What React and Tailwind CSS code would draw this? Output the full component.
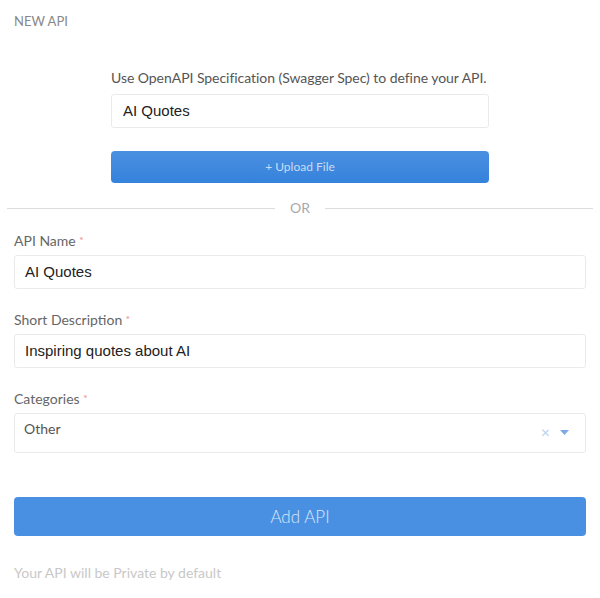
export default function App() {
  const lato = { fontFamily: 'Lato, "Open Sans", sans-serif' };
  return (
    <div className="w-[600px] h-[598px] bg-white font-['Lato',sans-serif] text-[#555]">
      <div className="px-[14px] pt-[13px]">
        <div className="text-[13px] leading-[16px] uppercase text-[#888]">New API</div>
      </div>

      {/* spec upload */}
      <div className="mx-auto w-[378px] mt-[40px]">
        <p className="text-[14px] leading-[18px] text-[#555] whitespace-nowrap tracking-[-0.05px]">
          Use OpenAPI Specification (Swagger Spec) to define your API.
        </p>
        <div className="mt-[7px] h-[34px] border border-[#eaeaea] rounded-[3px] flex items-center px-[11px] font-['Liberation_Sans',Arial,sans-serif] text-[15px] text-[#222]">
          AI Quotes
        </div>
        <button className="mt-[23px] w-full h-[32px] rounded-[4px] bg-gradient-to-b from-[#4a90e2] to-[#3582db] text-[#c9dcf5] text-[12px] flex items-center justify-center">
          + Upload File
        </button>
      </div>

      {/* divider */}
      <div className="flex items-center mx-[7px] mt-[17px] h-[16px]">
        <div className="flex-1 h-px bg-[#dcdcdc]" />
        <span className="px-[15px] text-[14px] text-[#aaa] leading-[16px]">OR</span>
        <div className="flex-1 h-px bg-[#dcdcdc]" />
      </div>

      <div className="px-[14px]">
        <Label text="API Name" className="mt-[16px]" />
        <Field value="AI Quotes" />

        <Label text="Short Description" className="mt-[22px]" />
        <Field value="Inspiring quotes about AI" />

        <Label text="Categories" className="mt-[22px]" />
        <div className="mt-[6px] h-[40px] border border-[#eaeaea] rounded-[3px] flex items-start justify-between pl-[9px] pr-[16px] pt-[6px]">
          <span className="text-[14px] text-[#555] leading-[18px]">Other</span>
          <div className="flex items-center gap-[10px] pt-[6px]">
            <span className="text-[16px] leading-[12px] text-[#b8cff0]">×</span>
            <svg width="9" height="5" viewBox="0 0 9 5">
              <path d="M0 0h9L4.5 5z" fill="#7fa9e6" />
            </svg>
          </div>
        </div>

        <button className="mt-[44px] w-full h-[39px] rounded-[4px] bg-[#4a90e2] text-[#dce8f8] text-[17px] font-light flex items-center justify-center">
          Add API
        </button>

        <p className="mt-[28px] text-[14px] leading-[18px] text-[#c8c8c8]" style={lato}>
          Your API will be Private by default
        </p>
      </div>
    </div>
  );
}

function Label({ text, className = '' }) {
  return (
    <div className={`text-[14px] leading-[17px] text-[#666] ${className}`}>
      {text} <span className="text-[#f08080] text-[10px] align-top">*</span>
    </div>
  );
}

function Field({ value }) {
  return (
    <div className="mt-[6px] h-[34px] border border-[#eaeaea] rounded-[3px] flex items-center px-[10px] font-['Liberation_Sans',Arial,sans-serif] text-[15px] text-[#222]">
      {value}
    </div>
  );
}
